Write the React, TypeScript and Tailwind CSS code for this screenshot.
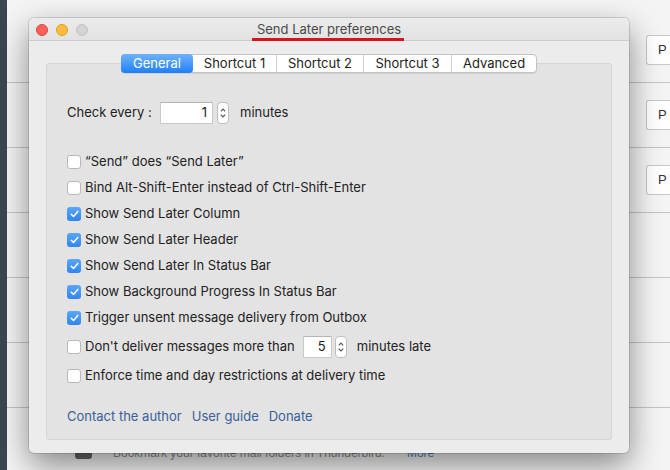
import React from "react";

const font = { fontFamily: 'Inter, "Liberation Sans", Arial, sans-serif' };
const bgFont = { fontFamily: '"Liberation Sans", Arial, sans-serif' };

const Stepper: React.FC = () => (
  <div className="flex h-[22px] w-[12px] flex-col items-center justify-center gap-[2px] rounded-[4px] border border-[#bfbfbf] bg-white">
    <svg width="6" height="4" viewBox="0 0 6 4" fill="none">
      <path d="M0.8 3.3 L3 1 L5.2 3.3" stroke="#555" strokeWidth="1.1" />
    </svg>
    <svg width="6" height="4" viewBox="0 0 6 4" fill="none">
      <path d="M0.8 0.7 L3 3 L5.2 0.7" stroke="#555" strokeWidth="1.1" />
    </svg>
  </div>
);

const NumberBox: React.FC<{ value: string; width: string }> = ({ value, width }) => (
  <div
    className={`flex h-[22px] ${width} items-center justify-end border border-[#c9c9c9] border-t-[#b5b5b5] bg-white pr-[5px] text-[13px] text-[#222]`}
  >
    {value}
  </div>
);

const Check: React.FC<{ checked?: boolean }> = ({ checked }) =>
  checked ? (
    <div className="flex h-[14px] w-[14px] items-center justify-center rounded-[3px] bg-gradient-to-b from-[#5aa6f8] to-[#2f84ef]">
      <svg width="9" height="8" viewBox="0 0 9 8" fill="none">
        <path d="M1.2 4.2 L3.5 6.4 L7.8 1.4" stroke="white" strokeWidth="1.5" strokeLinecap="round" strokeLinejoin="round" />
      </svg>
    </div>
  ) : (
    <div className="h-[14px] w-[14px] rounded-[3px] border border-[#b9b9b9] bg-white" />
  );

const options: { label: string; checked: boolean }[] = [
  { label: "\u201cSend\u201d does \u201cSend Later\u201d", checked: false },
  { label: "Bind Alt-Shift-Enter instead of Ctrl-Shift-Enter", checked: false },
  { label: "Show Send Later Column", checked: true },
  { label: "Show Send Later Header", checked: true },
  { label: "Show Send Later In Status Bar", checked: true },
  { label: "Show Background Progress In Status Bar", checked: true },
  { label: "Trigger unsent message delivery from Outbox", checked: true },
];

const tabs = ["General", "Shortcut 1", "Shortcut 2", "Shortcut 3", "Advanced"];
const tabWidths = ["w-[72px]", "w-[84px]", "w-[87px]", "w-[88px]", "w-[84px]"];

export default function App() {
  return (
    <div className="relative flex h-[470px] w-[670px] overflow-hidden bg-[#f4f4f4]" style={font}>
      {/* desktop behind the dialog */}
      <div className="h-full w-[7px] bg-[#3a4650]" />
      <div className="flex flex-1 flex-col pt-[18px]" style={bgFont}>
        {[0, 1, 2, 3, 4, 5].map((i) => (
          <div key={i} className="flex h-[65px] items-center border-b border-[#c4c4c4] pr-0">
            <div className="flex-1" />
            {i < 3 && (
              <div className="flex h-[30px] w-[24px] items-center rounded-l-[3px] border border-r-0 border-[#c8c8c8] bg-white pl-[11px] text-[13px] text-[#333]">
                P
              </div>
            )}
          </div>
        ))}
        <div className="flex items-center pt-[36px]">
          <div className="ml-[68px] h-[12px] w-[17px] rounded-[3px] bg-[#666]" />
          <span className="ml-[21px] text-[12px] text-[#8a8a8a]">Bookmark your favorite mail folders in Thunderbird.</span>
          <span className="ml-[22px] text-[12px] text-[#5a7fb8]">More</span>
        </div>
      </div>

      {/* dialog window */}
      <div className="absolute left-[29px] top-[18px] flex h-[435px] w-[600px] flex-col rounded-[5px] bg-[#ececec] shadow-[0_12px_32px_rgba(0,0,0,0.45),0_0_0_1px_rgba(0,0,0,0.12)]">
        <div className="relative flex h-[23px] items-center justify-center rounded-t-[5px] border-b border-[#cdcdcd] bg-gradient-to-b from-[#ececec] to-[#e2e2e2] pt-[2px]">
          <div className="absolute left-[7px] top-[6px] flex gap-[8px]">
            <div className="h-[12px] w-[12px] rounded-full border border-[#e2463f] bg-[#fc605b]" />
            <div className="h-[12px] w-[12px] rounded-full border border-[#e1a116] bg-[#fdbc40]" />
            <div className="h-[12px] w-[12px] rounded-full border border-[#c4c4c4] bg-[#d3d3d3]" />
          </div>
          <div className="relative text-[13px] text-[#4a4a4a]">
            Send Later preferences
            <div className="absolute -left-[5px] -right-[3px] top-[18px] h-[3px] bg-[#d4161c]" />
          </div>
        </div>

        <div className="mx-[17px] mb-[13px] mt-[22px] flex flex-1 flex-col rounded-[3px] border border-[#d6d6d6] bg-[#e3e3e3] px-[20px]">
          <div className="-mt-[10px] flex justify-center">
            <div className="flex h-[19px] rounded-[4px] border border-[#c2c2c2] bg-white text-[13px] text-[#222] shadow-[0_1px_1px_rgba(0,0,0,0.08)]">
              {tabs.map((t, i) => (
                <div
                  key={t}
                  className={`flex items-center justify-center ${tabWidths[i]} ${
                    i === 0
                      ? "-my-px -ml-px rounded-[4px] bg-gradient-to-b from-[#6cb2fb] to-[#1d7ff7] text-white"
                      : i < tabs.length - 1
                      ? "border-r border-[#cfcfcf]"
                      : ""
                  }`}
                >
                  {t}
                </div>
              ))}
            </div>
          </div>

          <div className="mt-[29px] flex items-center text-[13px] text-[#222]">
            <span className="w-[93px]">Check every :</span>
            <NumberBox value="1" width="w-[53px]" />
            <div className="ml-[4px]">
              <Stepper />
            </div>
            <span className="ml-[11px]">minutes</span>
          </div>

          <div className="mt-[25px] flex flex-col text-[13px] text-[#222]">
            {options.map((o) => (
              <div key={o.label} className="flex h-[26px] items-center">
                <Check checked={o.checked} />
                <span className="ml-[4px]">{o.label}</span>
              </div>
            ))}
            <div className="flex h-[32px] items-center">
              <Check />
              <span className="ml-[4px]">Don't deliver messages more than</span>
              <div className="ml-[8px]">
                <NumberBox value="5" width="w-[29px]" />
              </div>
              <div className="ml-[3px]">
                <Stepper />
              </div>
              <span className="ml-[10px]">minutes late</span>
            </div>
            <div className="flex h-[26px] items-center">
              <Check />
              <span className="ml-[4px]">Enforce time and day restrictions at delivery time</span>
            </div>
          </div>

          <div className="mt-[18px] flex gap-[10px] text-[13px] text-[#3b5f98]">
            <span>Contact the author</span>
            <span>User guide</span>
            <span>Donate</span>
          </div>
        </div>
      </div>
    </div>
  );
}
